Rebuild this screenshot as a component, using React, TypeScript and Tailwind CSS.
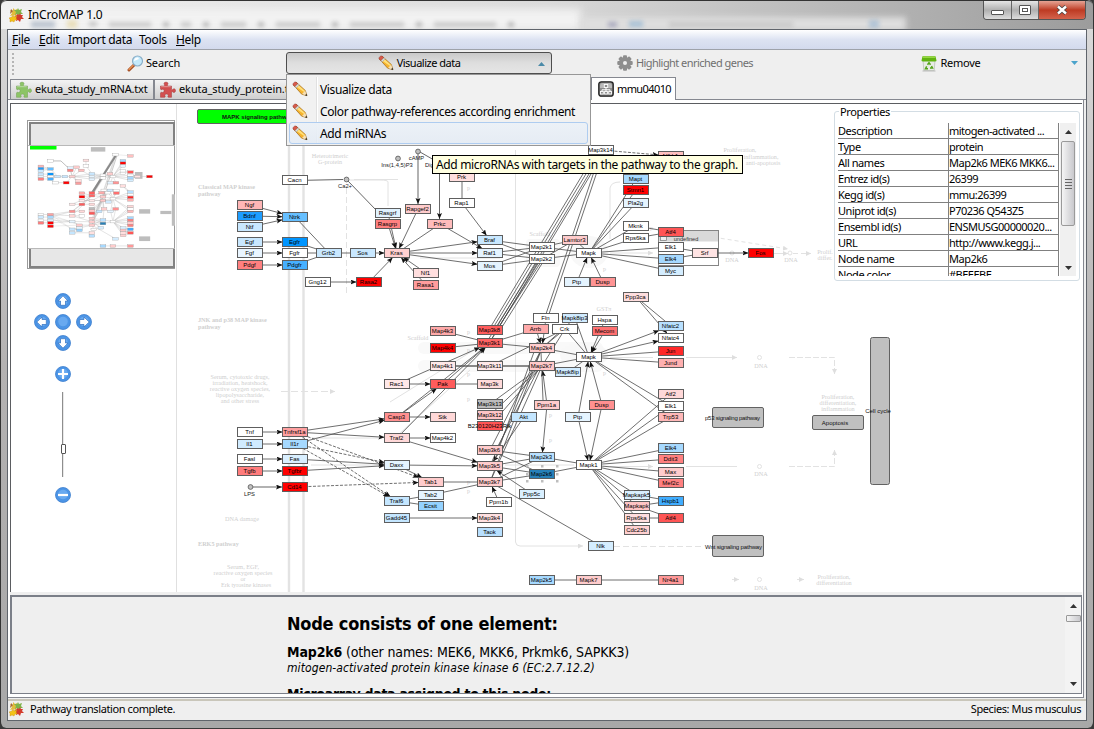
import React from "react";

type GraphNode = { id: string; x: number; y: number; fill: string };

const NODE_W = 25;
const NODE_H = 9;

const nodeTable = `
Ngf 237 200 #ffb6b6;Bdnf 237 211 #1e9dff;Ntf 237 222 #c9e8ff;Egf 237 237 #c9e8ff;Fgf 237 248 #e9f5ff;Pdgf 237 260 #ff8080
Cacn 282 175 #ffffff;Ntrk 282 212 #66bfff;Egfr 282 237 #0095ff;Fgfr 282 248 #ffffff;Pdgfr 282 260 #47b0ff
Grb2 316 248 #c9e8ff;Sos 350 248 #c9e8ff;Gng12 305 277 #ffffff;Rasa2 356 277 #ff0000
Rasgrf 375 208 #e0f2ff;Rasgrp 375 219 #ff8080;Rapgef2 405 204 #ffcccc;Prkc 427 219 #ffbcbc;Prk 449 172 #ffdede;Rap1 449 198 #ffffff
Kras 384 248 #ffd0d0;Nf1 413 268 #ffdede;Rasa1 413 280 #ff9c9c;Braf 477 235 #c9e8ff;Raf1 477 248 #e5f4ff;Mos 477 261 #e5f4ff
Map2k1 529 242 #ffffff;Map2k2 529 254 #ffffff;Map3k14 588 145 #ffffff;Nfkb1 658 151 #ffc0c0;Mapt 623 174 #a6d9ff;Stmn1 623 185 #ff0000
Pla2g 623 198 #e5f4ff;Mknk 623 221 #ffffff;Rps6ka 623 233 #ffffff;Lamtor3 562 235 #ffcccc;Mapk 576 248 #ffffff
Atf4 658 227 #ff5555;Elk1 658 242 #ffffff;Elk4 658 254 #a6d9ff;Myc 658 266 #d4edff;Srf 692 248 #ffe4e4;Fos 748 248 #ff0000
Ptp 564 277 #e5f4ff;Dusp 590 277 #ff9494;Ppp3ca 623 292 #ffdede
Tnf 237 427 #ffffff;Il1 237 439 #d0ebff;Fasl 237 454 #ffffff;Tgfb 237 466 #ff7c7c;Tnfrsf1a 282 427 #ffa0a0;Il1r 282 439 #a6d9ff
Fas 282 454 #d9efff;Tgfbr 282 466 #ff0000;Cd14 282 482 #ff0000
Map4k3 430 326 #ffaaaa;Map4k4 430 343 #ff0000;Map4k1 430 361 #ffe8e8;Pak 430 379 #ff5c5c;Rac1 384 379 #ffe8e8
Map3k8 477 325 #ff5c5c;Map3k1 477 338 #ff6464;Map3k11 477 361 #ffe8e8;Map3k 477 379 #ffdada;Fln 533 313 #ffffff;Arrb 523 324 #ffaaaa
Crk 552 324 #ffffff;Map2k4 529 343 #ffcccc;Map2k7 529 361 #ffc8c8;Mapk8ip 555 367 #d0ebff
Map3k13 477 399 #bcbcbc;Map3k12 477 410 #ffc4c4;B230120H23Rik 477 421 #ff5555;Casp3 384 412 #ff9090;Stk 430 412 #ffd8d8
Traf2 384 433 #ffd8d8;Map4k2 430 433 #ffffff;Map3k6 477 445 #ffcccc;Map3k5 477 461 #ffcccc;Map3k7 477 477 #ffcccc
Daxx 384 460 #e5f4ff;Tab1 418 477 #ffcccc;Tab2 418 490 #e5f4ff;Ecsit 418 501 #94d2ff;Traf6 384 496 #c4e6ff;Gadd45 384 513 #c4e6ff
Map3k4 477 513 #ffe0e0;Taok 477 527 #b8e0ff;Ppm1b 486 497 #ffffff;Ppm1a 534 400 #ffcccc;Akt 511 412 #c4e6ff
Map2k3 529 452 #b8e0ff;Map2k6 529 469 #2680b8;Ppp5c 519 489 #d9efff;Map2k5 529 575 #a6d9ff
Mapk8ip3 562 313 #d0ebff;Hspa 592 315 #ffffff;Mecom 592 326 #ff7070;Mapk|2 576 352 #ffffff
Nfatc2 658 321 #b8e0ff;Nfatc4 658 333 #ffffff;Jun 658 346 #ff2828;Jund 658 358 #ffb0b0
Atf2 658 389 #ffd8d8;Elk1|2 658 401 #ffffff;Trp53 658 412 #ffb8b8;Elk4|2 658 443 #a6d9ff;Ddit3 658 454 #ff8080;Max 658 467 #ffcccc;Mef2c 658 478 #ff8080
Dusp|2 589 400 #ff9090;Ptp|2 565 412 #e5f4ff;Mapk1 576 460 #ffffff;Mapkapk5 624 490 #d9efff;Mapkapk 624 501 #ffc4c4
Rps6ka|2 624 513 #ffdede;Cdc25b 624 525 #ffd0d0;Hspb1 658 496 #40adff;Atf4|2 658 513 #ff5555
Nlk 588 541 #d4edff;Mapk7 576 575 #ffcccc;Nr4a1 658 575 #ff9898`;

const nodes: GraphNode[] = nodeTable
  .trim()
  .split(/[;\n]/)
  .map((row) => {
    const [id, x, y, fill] = row.trim().split(" ");
    return { id, x: Number(x) + 0.5, y: Number(y) + 0.5, fill };
  });

const byId: Record<string, GraphNode> = Object.fromEntries(nodes.map((n) => [n.id, n]));

// ">" draws an arrow head, "-" a plain line, "~" a dashed arrow
const edgeTable = `
Ngf > Ntrk;Bdnf > Ntrk;Ntf > Ntrk;Egf > Egfr;Fgf > Fgfr;Pdgf > Pdgfr;Ntrk - Grb2;Egfr - Grb2;Fgfr - Grb2;Pdgfr - Grb2
Grb2 - Sos;Sos > Kras;Gng12 > Rasa2;Rasa2 > Kras;Rasgrf > Kras;Rasgrp > Kras;Rapgef2 > Kras;Prkc - Kras;Nf1 > Kras;Rasa1 > Kras
Kras > Braf;Kras > Raf1;Kras > Mos;Prkc > Raf1;Prk - Rap1;Rap1 > Braf
Braf - Map2k1;Braf - Map2k2;Raf1 - Map2k1;Raf1 - Map2k2;Mos - Map2k1;Mos - Map2k2;Map2k1 - Mapk;Map2k2 - Mapk;Lamtor3 - Mapk;Lamtor3 - Map2k1;Lamtor3 - Map2k2
Map3k14 ~ Nfkb1;Mapk - Mapt;Mapk - Stmn1;Mapk - Pla2g;Mapk - Mknk;Mapk - Rps6ka;Mapk - Elk1;Mapk - Elk4;Mapk - Myc;Ptp > Mapk;Dusp > Mapk
Mknk - Atf4;Rps6ka - Atf4;Elk1 - Srf;Elk4 - Srf;Srf > Fos
Tnf > Tnfrsf1a;Il1 > Il1r;Fasl > Fas;Tgfb > Tgfbr;Tnfrsf1a > Casp3;Il1r > Casp3;Tnfrsf1a > Traf2;Fas > Daxx;Tgfbr > Daxx
Tnfrsf1a ~ Tab1;Il1r ~ Daxx;Il1r ~ Traf6;Tnfrsf1a ~ Traf6;Cd14 ~ Tab1
Map4k3 - Map3k1;Map4k4 - Map3k1;Map4k1 - Map3k11;Map4k1 - Map2k7;Rac1 > Pak;Rac1 > Map3k1;Pak > Map3k1;Pak - Map3k;Casp3 > Pak;Casp3 > Map3k1;Casp3 > Stk;Traf2 > Map4k2;Traf2 > Map3k5;Traf2 > Map3k1
Daxx > Map3k5;Daxx > Tab1;Tab1 - Map3k7;Tab2 - Map3k7;Traf6 - Tab2;Traf6 - Ecsit;Gadd45 > Map3k4
Map3k1 - Arrb;Map3k1 - Map2k4;Map3k11 - Map2k7;Map3k11 - Crk;Map3k13 - Map2k7;Map3k12 - Map2k7;B230120H23Rik - Map2k7
Map3k6 - Map2k3;Map3k6 - Map2k6;Map3k5 - Map2k3;Map3k5 - Map2k6;Map3k7 - Map2k3;Map3k7 - Map2k6;Map3k6 - Map2k4;Map3k5 - Map2k4;Map3k7 - Map2k7;Map3k7 - Map2k4
Ppm1b > Map3k7;Ppp5c > Map3k5;Akt > Map3k5;Ppm1a > Map2k7;Ppm1a > Map2k3;Map3k7 - Nlk
Arrb > Map2k4;Fln > Map2k4;Crk - Map2k4;Crk - Map2k7;Mapk8ip3 - Map2k4;Mapk8ip3 - Mapk|2;Crk - Mapk|2;Map2k4 - Mapk|2;Map2k7 - Mapk|2;Mapk8ip - Mapk|2
Hspa > Mapk|2;Mecom > Mapk|2;Mapk|2 > Nfatc2;Mapk|2 > Nfatc4;Mapk|2 - Jun;Mapk|2 - Jund;Mapk|2 - Elk1|2;Mapk|2 - Trp53;Ppp3ca > Nfatc4;Ppp3ca - Nfatc2
Ptp|2 > Mapk|2;Dusp|2 > Mapk|2;Ptp|2 > Mapk1;Dusp|2 > Mapk1;Map2k3 - Mapk1;Map2k6 - Mapk1
Mapk1 - Atf2;Mapk1 - Elk1|2;Mapk1 - Trp53;Mapk1 - Elk4|2;Mapk1 - Ddit3;Mapk1 - Max;Mapk1 - Mef2c;Mapk1 - Mapkapk5;Mapk1 - Mapkapk;Mapk1 - Rps6ka|2;Mapk1 - Cdc25b
Mapkapk5 - Hspb1;Mapkapk - Hspb1;Mapkapk - Atf4|2;Rps6ka|2 - Atf4|2;Map2k5 - Mapk7;Mapk7 - Nr4a1`;

const edges = edgeTable
  .trim()
  .split(/[;\n]/)
  .map((row) => row.trim().split(" "))
  .map(([from, kind, to]) => {
    const a = byId[from];
    const b = byId[to];
    const ax = a.x + NODE_W / 2;
    const ay = a.y + NODE_H / 2;
    const bx = b.x + NODE_W / 2;
    const by = b.y + NODE_H / 2;
    const dx = ax - bx;
    const dy = ay - by;
    const t =
      kind === "-" ? 0 : Math.min(dx ? (NODE_W / 2) / Math.abs(dx) : 1, dy ? (NODE_H / 2) / Math.abs(dy) : 1);
    return { key: from + kind + to, kind, x1: ax, y1: ay, x2: bx + dx * t, y2: by + dy * t };
  });

const bundle = [
  [595, 154, 490, 328], [598, 154, 493, 328], [601, 154, 495, 330], [603, 154, 490, 342],
  [600, 154, 546, 314], [603, 154, 549, 314],
  [537, 262, 488, 340], [539, 262, 491, 340], [541, 262, 496, 331], [543, 262, 497, 335],
  [534, 352, 494, 462], [538, 370, 498, 446], [541, 352, 543, 400],
];

function Edges({ heads }: { heads: boolean }) {
  return (
    <g stroke="#4a4a4a" strokeWidth={heads ? 0.8 : 1.6} opacity={heads ? 1 : 0.45}>
      {edges.map((e) => (
        <line key={e.key} x1={e.x1} y1={e.y1} x2={e.x2} y2={e.y2}
          strokeDasharray={e.kind === "~" ? "3 1.5" : undefined}
          markerEnd={heads && e.kind !== "-" ? "url(#head)" : undefined} />
      ))}
      {bundle.map(([x1, y1, x2, y2], i) => (
        <line key={i} x1={x1} y1={y1} x2={x2} y2={y2} />
      ))}
    </g>
  );
}

const circles: [number, number, string, number, number][] = [
  [346.5, 179.5, "Ca2+", 345, 188],
  [398, 158.5, "Ins(1,4,5)P3", 397, 167],
  [418, 151.5, "cAMP", 416.5, 160],
  [250.5, 487, "LPS", 249.5, 496],
];

const faint: [number, number, string, "start" | "middle", boolean][] = [
  [198, 189, "Classical MAP kinase", "start", true], [198, 195.5, "pathway", "start", true],
  [198, 322, "JNK and p38 MAP kinase", "start", true], [198, 328.5, "pathway", "start", true],
  [240, 379, "Serum, cytotoxic drugs,", "middle", false], [240, 385, "irradiation, heatshock,", "middle", false],
  [240, 391, "reactive oxygen species,", "middle", false], [240, 397, "lipopolysaccharide,", "middle", false],
  [240, 403, "and other stress", "middle", false], [242, 521, "DNA damage", "middle", false],
  [198, 546, "ERK5 pathway", "start", true], [243, 569, "Serum, EGF,", "middle", false],
  [243, 575, "reactive oxygen species", "middle", false], [243, 581, "or", "middle", false],
  [246, 587, "Erk tyrosine kinases", "middle", false], [330, 158, "Heterotrimeric", "middle", false],
  [330, 164, "G-protein", "middle", false], [418, 340, "Scaffold", "middle", false],
  [540, 236, "Scaffold", "middle", false], [604, 311, "GSTπ", "middle", false],
  [740, 152, "Proliferation,", "middle", false], [761, 159, "inflammation,", "middle", false],
  [763, 165, "anti-apoptosis", "middle", false], [838, 399, "Proliferation,", "middle", false],
  [838, 405, "differentiation,", "middle", false], [838, 411, "inflammation", "middle", false],
  [834, 579, "Proliferation,", "middle", false], [834, 585, "differentiation", "middle", false],
  [732, 262, "DNA", "middle", false], [791, 262, "DNA", "middle", false],
  [825, 254, "Prolif.", "middle", false], [825, 260, "differ.", "middle", false],
  [761, 368, "DNA", "middle", false], [761, 476, "DNA", "middle", false], [761, 590, "DNA", "middle", false],
];

function PathwayGraph() {
  return (
    <svg width="905" height="488" viewBox="177 104 905 488" className="block" fontFamily="'Liberation Sans', Arial, sans-serif">
      <defs>
        <marker id="head" markerUnits="userSpaceOnUse" markerWidth="7" markerHeight="6" refX="6" refY="2.5" orient="auto">
          <path d="M0 0L6 2.5L0 5L1.2 2.5Z" fill="#111" stroke="none" />
        </marker>
        <marker id="faintHead" markerUnits="userSpaceOnUse" markerWidth="7" markerHeight="6" refX="5" refY="2.5" orient="auto">
          <path d="M0 0L5 2.5L0 5Z" fill="#dedede" />
        </marker>
      </defs>
      <path d="M289 104V592M303.5 104V592" stroke="#e3e3e3" strokeWidth="2.4" />
      <rect x="418" y="342" width="185" height="12" rx="6" fill="#f9f9f9" />
      <rect x="418" y="360" width="185" height="12" rx="6" fill="#f9f9f9" />
      <ellipse cx="589" cy="252" rx="19" ry="16" fill="#f8f8f8" />
      <ellipse cx="584" cy="355" rx="24" ry="13" fill="#f8f8f8" />
      <rect x="526" y="239" width="34" height="28" rx="4" fill="#f8f8f8" />
      <g fill="none" stroke="#e2e2e2" strokeWidth="1">
        <path d="M515.5 150V542Q516 546 520 546H583" markerEnd="url(#faintHead)" />
        <path d="M614 546.5H702" strokeDasharray="6 3" />
        <path d="M346.5 188V295" strokeDasharray="6 3" />
        <path d="M281 391.5H335" strokeDasharray="7 3" markerEnd="url(#faintHead)" />
        <path d="M398 179.5H354M610 253H653" markerEnd="url(#faintHead)" />
        <path d="M610 357.5H653M686 466.500H737M686 357.500H737M610 466.500H653" markerEnd="url(#faintHead)" />
        <path d="M686 357.5H737" markerEnd="url(#faintHead)" />
        <path d="M780 253.5H788M766 253.5H788" markerEnd="url(#faintHead)" />
        <path d="M793 253.5H811" strokeDasharray="5 3" markerEnd="url(#faintHead)" />
        <path d="M700 235L788 249" strokeDasharray="4 3" markerEnd="url(#faintHead)" />
        <path d="M789 357.5H834.5V374" strokeDasharray="6 2" markerEnd="url(#faintHead)" />
        <path d="M789 466.5H834.5V450" strokeDasharray="6 2" markerEnd="url(#faintHead)" />
        <path d="M610 239V188Q611 182 620 182M388 206V182Q388 180 380 180H348" />
        <path d="M420 258H500M312 438H380M311 465H380M390 402L474 350M398 435L470 370M505 465H574" />
        <path d="M732 579.5H739" markerEnd="url(#faintHead)" />
        <path d="M797 579.5H804" markerEnd="url(#faintHead)" />
        <circle cx="759.5" cy="357.5" r="2" /><circle cx="759.5" cy="466.5" r="2" /><circle cx="759.5" cy="579.5" r="2" />
        <circle cx="732" cy="253" r="2" /><circle cx="790" cy="253" r="2" />
      </g>
      <g fill="#cfcfcf" fontSize="6.2" fontFamily="'Liberation Serif', serif">
        {faint.map(([x, y, label, anchor, bold], i) => (
          <text key={i} x={x} y={y} textAnchor={anchor} fontWeight={bold ? 700 : 400}>{label}</text>
        ))}
        {[[467, 190], [467, 334], [467, 352], [467, 376], [467, 401], [467, 484], [467, 493], [527, 381], [549, 417], [549, 442], [603, 271], [603, 375], [650, 230]].map(([x, y]) => (
          <text key={x + "," + y} x={x} y={y}>p</text>
        ))}
      </g>
      <rect x="658.5" y="230.5" width="60" height="35" fill="#fff" stroke="#858585" />
      <rect x="659" y="231" width="59" height="10.5" fill="#d9d9d9" />
      <rect x="660.5" y="236.5" width="6" height="4" fill="#eee" stroke="#777" strokeWidth=".7" />
      <text x="686" y="240.5" fontSize="5.6" textAnchor="middle" fill="#333">undefined</text>
      <Edges heads />
      <g stroke="#4a4a4a" strokeWidth=".85" fill="none">
        <path d="M295 180.5L343 179.5M348 181L376 210" />
        <path d="M253 487H282" markerEnd="url(#head)" />
        <path d="M418 154V204" markerEnd="url(#head)" />
        <path d="M439.5 160V219" markerEnd="url(#head)" />
        <path d="M420 152L434 160" />
      </g>
      {circles.map(([cx, cy, label, tx, ty]) => (
        <g key={label}>
          <circle cx={cx} cy={cy} r="2.4" fill="#c0c0c0" stroke="#555" strokeWidth=".8" />
          <text x={tx} y={ty} fontSize="5.8" textAnchor="middle" fill="#222">{label}</text>
        </g>
      ))}
      <text x="425" y="167" fontSize="5.8" fill="#222">Diglyceride</text>
      {nodes.map((n) => (
        <g key={n.id}>
          <rect x={n.x} y={n.y} width={NODE_W} height={NODE_H} fill={n.fill} stroke="#5e5e5e" strokeWidth="1" />
          <text x={n.x + NODE_W / 2 - 0.5} y={n.y + 6.9} fontSize="6" textAnchor="middle" fill="#000">{n.id.split("|")[0]}</text>
        </g>
      ))}
      <g fill="#bdbdbd">
        {[[526, 465], [541, 465], [556, 465], [526, 473], [556, 473], [526, 480], [541, 480], [556, 480]].map(([x, y]) => (
          <rect key={x + "," + y} x={x} y={y} width="2.5" height="2.5" />
        ))}
      </g>
      <g fill="#c0c0c0" stroke="#626262">
        <rect x="712.5" y="407.5" width="51" height="20" rx="1.5" />
        <rect x="712.5" y="535.5" width="51" height="21" rx="1.5" />
        <rect x="812.5" y="415.5" width="51" height="14" rx="1.5" />
        <rect x="870.5" y="337.5" width="19" height="147" rx="2" />
        <rect x="197.5" y="109.5" width="118" height="14" rx="1.5" fill="#00ff00" />
      </g>
      <g fontSize="6" textAnchor="middle" fill="#111">
        <text x="732.5" y="420" textLength="55">p53 signaling pathway</text>
        <text x="733.5" y="549" textLength="57">Wnt signaling pathway</text>
        <text x="835" y="425">Apoptosis</text>
        <text x="878" y="413">Cell cycle</text>
        <text x="222" y="119" fontWeight="700" textAnchor="start">MAPK signaling pathway</text>
      </g>
    </svg>
  );
}

function Minimap() {
  return (
    <svg width="148" height="149" viewBox="27 120 148 149" className="block">
      <rect x="27.5" y="120.5" width="147" height="148" fill="#fff" stroke="#9a9a9a" />
      <rect x="30" y="123" width="144" height="22" fill="#e7e7e7" />
      <rect x="30" y="249" width="144" height="17" fill="#e7e7e7" />
      <path d="M30 145V123H174V145M30 249V267H174V249" fill="none" stroke="#828282" strokeWidth="2" />
      <path d="M28 145.5H175M28 248.5H175" stroke="#b8b8b8" />
      <rect x="30" y="146" width="26.5" height="3.5" fill="#00ff00" />
      <g transform="translate(-12.2 122.7) scale(0.2125)">
        <Edges heads={false} />
        <path d="M600 155L485 335M604 155L490 335" stroke="#777" strokeWidth="6" opacity=".8" />
        <path d="M608 155L545 345" stroke="#888" strokeWidth="3" opacity=".7" />
        <rect x="692" y="232" width="36" height="32" fill="#bdbdbd" />
        <path d="M295 180H344L376 210" fill="none" stroke="#999" strokeWidth="3" />
        {nodes.map((n) => (
          <rect key={n.id} x={n.x - 1} y={n.y - 1} width={NODE_W + 2} height={NODE_H + 3} fill={n.fill} stroke="#999" strokeWidth="1.5" />
        ))}
        <g fill="#bdbdbd">
          <rect x="712" y="407" width="52" height="21" /><rect x="712" y="535" width="52" height="22" />
          <rect x="812" y="415" width="52" height="15" /><rect x="866" y="337" width="16" height="148" />
          <rect x="485" y="115" width="68" height="21" />
        </g>
      </g>
    </svg>
  );
}

function Puzzle({ color, dark }: { color: string; dark: string }) {
  return (
    <svg width="17" height="17" viewBox="0 0 17 17" className="shrink-0">
      <path d="M5 5C6.500 4.500 5 3.500 5 2.500 5 .7 9 .7 9 2.500 9 3.500 7.500 4.500 9 5L12.500 5V8.200C13.500 9.500 14 7.800 15 7.800 17 7.800 17 11.500 15 11.500 14 11.500 13.500 10 12.500 11.200V16.300H9.500C8 15.800 9.500 15 9.300 14.200 9 12.700 6 12.700 5.800 14.200 5.700 15 7 15.800 5.500 16.300H1.500V12C2 10.500 3 11.800 4 11.500 5.600 11 5.600 8.500 4 8.200 3 8 2 9.500 1.500 8V5Z"
        fill={color} stroke={dark} strokeWidth=".5" />
      <path d="M2.200 5.700H11.700" stroke="#fff" opacity=".4" />
    </svg>
  );
}

function AppLogo() {
  return (
    <svg width="15" height="16" viewBox="0 0 15 16" className="shrink-0">
      <path d="M4 1l2 2 2-1v3l2 1-3 1v3L5 8 1 9l2-3-2-3 3 1z" fill="#e2bd3b" />
      <path d="M9 1l1 2 3-1-1 3 2 2-3 0-1 2-2-2-2 1 1-3-2-2 3 0z" fill="#7fb34a" />
      <path d="M11 6l1 2 2 0-1 2 2 2-3 0-1 3-2-2-2 1 0-3-2-1 2-1 1-2 2 1z" fill="#d33b2c" />
      <path d="M4 8l1 2 3-1-1 2 1 2-2 0-1 2-2-1-2 1 0-3-1-1 3-1z" fill="#f2c318" stroke="#c98a12" strokeWidth=".4" />
      <path d="M2 2l2 2-3 3z" fill="#a76734" />
    </svg>
  );
}

function Pencil() {
  return (
    <svg width="16" height="16" viewBox="0 0 16 16" className="shrink-0">
      <path d="M1.200 3.800L4 1.100 13.300 9.500 15 14.700 9.700 13.200Z" fill="#f6b32d" stroke="#9c6412" strokeWidth=".7" />
      <path d="M2.500 4.600L4.700 2.500 13 10 12 11Z" fill="#ffdf78" />
      <path d="M1 3.900C.5 2.500 2.500.5 4 1L5.900 2.700 2.900 5.600Z" fill="#d95a4b" stroke="#8d3b32" strokeWidth=".5" />
      <path d="M3 5.700L6 2.800 7.200 3.900 4.200 6.900Z" fill="#ddd" stroke="#888" strokeWidth=".4" />
      <path d="M10 13.100L13.200 9.800 14.900 14.700Z" fill="#f5dfb6" />
      <path d="M13 14.200L14.500 12.800 15.200 15Z" fill="#222" />
    </svg>
  );
}

function Magnifier() {
  return (
    <svg width="17" height="17" viewBox="0 0 17 17" className="shrink-0">
      <path d="M6.800 10.200L2 15" stroke="#a34e24" strokeWidth="3" strokeLinecap="round" />
      <path d="M6.300 10.300L2 14.500" stroke="#e89255" strokeWidth="1.200" strokeLinecap="round" />
      <circle cx="10.500" cy="6" r="5" fill="#c4e9fb" stroke="#8bafc8" strokeWidth="1.200" />
      <path d="M7 6A3.500 3.500 0 0 1 11 2.500L12 4Z" fill="#fff" />
    </svg>
  );
}

function Gear() {
  return (
    <svg width="16" height="16" viewBox="0 0 16 16" className="shrink-0">
      <g fill="#8e8e8e">
        {[0, 45, 90, 135].map((a) => (
          <rect key={a} x="6" y="0.300" width="4" height="15.400" rx="1" transform={`rotate(${a} 8 8)`} />
        ))}
        <circle cx="8" cy="8" r="6" />
      </g>
      <circle cx="8" cy="8" r="2" fill="#efefef" />
    </svg>
  );
}

function RecycleBin() {
  return (
    <svg width="16" height="17" viewBox="0 0 16 17" className="shrink-0">
      <path d="M2 5H14L13.200 15.500H2.800Z" fill="#e7ebe4" stroke="#b4bdb0" strokeWidth=".7" />
      <path d="M1.500 1.200H14.500L15.500 5.500Q15.500 6.500 14 6.500H2Q.5 6.500 .5 5.500Z" fill="#61b312" />
      <path d="M2 1.500H14L14.600 3H1.400Z" fill="#95d840" />
      <path d="M6.500 9.800L8 7.800 9.500 9.800M10.500 11L11.500 13H9M7 13.700H4.500L5.700 11.300" fill="none" stroke="#53a318" strokeWidth="1.500" />
      <path d="M1.500 16H14.500" stroke="#bbb" />
    </svg>
  );
}

function NetworkIcon() {
  return (
    <svg width="16" height="16" viewBox="0 0 16 16" className="shrink-0">
      <rect x=".8" y=".8" width="14.400" height="14.400" rx="2.500" fill="#8b8b8b" stroke="#1e1e1e" strokeWidth="1.300" />
      <path d="M2 5Q2 2 5 2H11Q14 2 14 5V7H2Z" fill="#b9b9b9" />
      <path d="M8 6.500V10M4 10.500V8.800H12V10.500" fill="none" stroke="#fff" />
      <g fill="#8b8b8b" stroke="#fff" strokeWidth=".9">
        <rect x="6.300" y="3.500" width="3.400" height="3" /><rect x="2.500" y="10.500" width="2.800" height="2.500" />
        <rect x="6.600" y="10.500" width="2.800" height="2.500" /><rect x="10.700" y="10.500" width="2.800" height="2.500" />
      </g>
    </svg>
  );
}

function RoundButton({ shape }: { shape: string }) {
  const turns: Record<string, number> = { up: 0, right: 90, down: 180, left: 270 };
  return (
    <svg width="16" height="16" viewBox="0 0 16 16" className="block">
      <circle cx="8" cy="8" r="7.500" fill="#4b94e6" stroke="#3e7fce" strokeWidth=".8" />
      <circle cx="8" cy="7.500" r="4.800" fill="#72b0f3" opacity=".75" />
      {shape in turns && (
        <path transform={`rotate(${turns[shape]} 8 8)`} d="M8 2.800L13 8H10.500V12.300H5.500V8H3Z" fill="#fff" stroke="#2f6fbd" strokeWidth=".7" />
      )}
      {shape === "plus" && <path d="M8 3V13M3 8H13" stroke="#fff" strokeWidth="2.200" />}
      {shape === "minus" && <path d="M3 8H13" stroke="#fff" strokeWidth="2.200" />}
    </svg>
  );
}

function Triangle({ up, color = "#333" }: { up?: boolean; color?: string }) {
  return (
    <svg width="7" height="4" viewBox="0 0 7 4" className="block">
      <path d={up ? "M3.500 0L7 4H0Z" : "M0 0H7L3.500 4Z"} fill={color} />
    </svg>
  );
}

const properties: [string, string][] = [
  ["Description", "mitogen-activated ..."],
  ["Type", "protein"],
  ["All names", "Map2k6 MEK6 MKK6..."],
  ["Entrez id(s)", "26399"],
  ["Kegg id(s)", "mmu:26399"],
  ["Uniprot id(s)", "P70236 Q543Z5"],
  ["Ensembl id(s)", "ENSMUSG00000020..."],
  ["URL", "http://www.kegg.j..."],
  ["Node name", "Map2k6"],
  ["Node color", "#BEEEBE"],
];

function PropertiesPanel() {
  return (
    <section className="absolute left-[657px] top-[7px] h-[170px] w-[246px] rounded-[3px] border border-[#d3dde4] bg-white">
      <h2 className="absolute -top-[7px] left-[4px] bg-white px-px text-[11px] leading-[14px] tracking-[-0.35px]">Properties</h2>
      <div className="ml-[3px] mt-[11px] flex h-[153px] overflow-hidden">
        <div className="w-[221px] overflow-hidden">
          {properties.map(([name, value]) => (
            <div key={name} className="flex h-[16px] text-[11px] leading-[15px]">
              <div className="w-[111px] shrink-0 whitespace-nowrap border-b border-r border-[#808080] tracking-[-0.45px]">{name}</div>
              <div className="w-[110px] shrink-0 whitespace-nowrap border-b border-r border-[#808080] tracking-[-0.5px]">{value}</div>
            </div>
          ))}
        </div>
        <div className="ml-px flex w-[16px] flex-col items-center bg-[#f0f0f0]">
          <div className="flex h-[18px] items-center"><Triangle up /></div>
          <div className="flex h-[85px] w-[14px] flex-col items-center justify-center gap-[2px] rounded-[2px] border border-[#9a9a9a] bg-gradient-to-r from-[#f5f5f5] to-[#c9c9cd]">
            {[0, 1, 2, 3].map((i) => <div key={i} className="h-px w-[7px] bg-[#666]" />)}
          </div>
          <div className="mt-auto flex h-[16px] items-center"><Triangle /></div>
        </div>
      </div>
    </section>
  );
}

const menuItems = ["Visualize data", "Color pathway-references according enrichment", "Add miRNAs"];

function VisualizeMenu() {
  return (
    <div className="absolute left-0 top-[22px] z-20 flex h-[72px] w-[305px] flex-col border border-[#979797] bg-[#f1f1f1] px-[2px] pt-[3px] text-[12px] tracking-[-0.37px]">
      <div className="absolute bottom-[2px] left-[29px] top-[2px] w-[2px] border-l border-[#e0e0e0] bg-white" />
      {menuItems.map((item, i) => (
        <div key={item}
          className={
            i === 2
              ? "relative flex h-[22px] items-center gap-[12px] rounded-[3px] border border-[#aeccf0] bg-gradient-to-b from-[#ecf1f7] to-[#e3ebf5]/80 pl-[2px]"
              : "relative flex h-[22px] items-center gap-[12px] border border-transparent pl-[2px]"
          }>
          <Pencil />
          <span className="whitespace-nowrap pt-[2px]">{item}</span>
        </div>
      ))}
    </div>
  );
}

function TitleBar() {
  return (
    <header className="relative flex h-[29px] shrink-0 overflow-hidden rounded-t-[6px] border-t border-[#333] bg-gradient-to-r from-[#f0f0f0] via-[#d9d9d9] to-[#9c9c9c]">
      <div className="absolute left-0 top-[8px] h-[21px] w-[580px] bg-[#f2f2f2] blur-[4px]" />
      <div className="absolute left-[580px] top-[16px] h-[14px] w-[325px] bg-[#dedede] blur-[3px]" />
      <div className="absolute left-[30px] top-[19px] flex items-center gap-[12px] opacity-30 blur-[2px]">
        <div className="h-[7px] w-[24px] bg-[#4c668a]" />
        <div className="h-[8px] w-[10px] bg-[#d8b646]" />
        <div className="h-[4px] w-[8px] bg-[#555]" />
        <div className="h-[5px] w-[42px] bg-[#777]" />
        <div className="h-[5px] w-[6px] bg-[#444]" />
        <div className="h-[5px] w-[10px] bg-[#777]" />
        <div className="h-[5px] w-[6px] bg-[#444]" />
        <div className="h-[5px] w-[25px] bg-[#777]" />
        <div className="h-[5px] w-[6px] bg-[#444]" />
        <div className="h-[5px] w-[44px] bg-[#777]" />
        <div className="h-[5px] w-[6px] bg-[#444]" />
        <div className="h-[5px] w-[54px] bg-[#777]" />
        <div className="h-[5px] w-[6px] bg-[#444]" />
        <div className="h-[5px] w-[62px] bg-[#777]" />
        <div className="h-[5px] w-[6px] bg-[#444]" />
        <div className="ml-[82px] h-[5px] w-[9px] bg-[#337]" />
        <div className="h-[6px] w-[14px] bg-[#3584c4]" />
        <div className="ml-[14px] h-[5px] w-[124px] bg-[#999]" />
        <div className="ml-[64px] h-[8px] w-[10px] bg-[#4f8ac4]" />
      </div>
      <div className="relative flex w-full items-start pl-[8px]">
        <div className="mt-[6px]"><AppLogo /></div>
        <h1 className="ml-[4px] mt-[5px] text-[12px] leading-[17px] tracking-[-0.2px]">InCroMAP 1.0</h1>
        <div className="ml-auto mr-[7px] flex h-[19px] overflow-hidden rounded-b-[4px] border border-t-0 border-[#555]">
          <div className="flex w-[28px] items-center justify-center border-r border-[#666] bg-gradient-to-b from-[#e6e6e6] via-[#b0b0b0] to-[#ddd]">
            <div className="mt-[4px] h-[5px] w-[13px] rounded-[1px] border border-[#555] bg-white" />
          </div>
          <div className="flex w-[27px] items-center justify-center border-r border-[#666] bg-gradient-to-b from-[#e6e6e6] via-[#b0b0b0] to-[#ddd]">
            <div className="h-[10px] w-[12px] rounded-[1px] border border-[#555] bg-white p-[2px]"><div className="h-full border border-[#555]" /></div>
          </div>
          <div className="flex w-[46px] items-center justify-center bg-gradient-to-b from-[#e5a394] via-[#bd3a22] to-[#d4624b]">
            <svg width="12" height="10" viewBox="0 0 12 10">
              <path d="M2 1.500L10 8.500M10 1.500L2 8.500" stroke="#444" strokeWidth="4" />
              <path d="M2 1.500L10 8.500M10 1.500L2 8.500" stroke="#fff" strokeWidth="2.400" />
            </svg>
          </div>
        </div>
      </div>
    </header>
  );
}

export default function App() {
  return (
    <div className="flex h-[729px] w-[1094px] flex-col overflow-hidden bg-[#3a3a3a] font-['Noto_Sans',sans-serif] text-black">
      <div className="flex h-[728px] flex-col overflow-hidden rounded-[6px] border-x border-[#333] bg-gradient-to-b from-[#dcdcdc] via-[#b4b2b2] to-[#a8a8a8]">
        <TitleBar />
        <div className="ml-[6px] mr-[6px] flex h-[692px] flex-col border border-[#5f646b] bg-[#efefef]">
          <nav className="flex h-[20px] shrink-0 items-center border-b border-[#9ea2aa] bg-gradient-to-b from-white via-[#dde3f2] to-[#d3daed] pl-[4px] text-[12px] leading-[18px] tracking-[-0.3px]">
            <span className="w-[27px]"><u>F</u>ile</span>
            <span className="w-[29px]"><u>E</u>dit</span>
            <span className="w-[71px] whitespace-nowrap">Import data</span>
            <span className="w-[37px]">Tools</span>
            <span><u>H</u>elp</span>
          </nav>
          <div className="flex h-[27px] shrink-0 text-[11px]">
            <div className="ml-[4px] mt-[3px] h-[22px] w-[8px] border-l-2 border-dotted border-[#b5b5b5]" />
            <div className="flex h-[26px] w-[266px] items-center justify-center gap-[2px] pl-px tracking-[-0.1px]"><Magnifier />Search</div>
            <div className="relative mt-[2px] h-[22px] w-[266px]">
              <div className="relative flex h-[22px] items-center justify-center gap-[3px] rounded-[3px] border border-[#4e4e4e] bg-gradient-to-b from-[#c9c9c9] via-[#dedede] to-[#e5e5e5] tracking-[-0.5px]">
                <Pencil /><span className="pt-px">Visualize data</span>
                <div className="absolute right-[6px] top-[9px]"><Triangle up color="#4a8aa8" /></div>
              </div>
              <VisualizeMenu />
            </div>
            <div className="flex h-[26px] w-[266px] items-center justify-center gap-[3px] tracking-[-0.54px] text-[#707070]"><Gear />Highlight enriched genes</div>
            <div className="relative flex h-[26px] w-[266px] items-center justify-center gap-[3px] tracking-[-0.25px]">
              <RecycleBin />Remove
              <div className="absolute right-[6px] top-[11px]"><Triangle color="#4ba3cb" /></div>
            </div>
          </div>
          <div className="flex h-[23px] shrink-0 items-end border-b border-[#858890] pl-[2px] text-[11px]">
            <div className="flex h-[20px] w-[144px] items-center gap-[3px] border border-b-0 border-[#858890] bg-gradient-to-b from-[#f3f3f3] to-[#cfcfcf] pl-[4px]">
              <Puzzle color="#8cc466" dark="#6f9e50" /><span className="whitespace-nowrap tracking-[-0.2px]">ekuta_study_mRNA.txt</span>
            </div>
            <div className="flex h-[20px] w-[437px] items-center gap-[3px] border border-b-0 border-[#858890] bg-gradient-to-b from-[#f3f3f3] to-[#cfcfcf] pl-[4px]">
              <Puzzle color="#d25050" dark="#a03838" /><span className="whitespace-nowrap tracking-[-0.1px]">ekuta_study_protein.txt</span>
            </div>
            <div className="-mb-px flex h-[23px] w-[85px] items-center gap-[3px] border border-b-0 border-[#858890] bg-white pl-[6px]">
              <NetworkIcon /><span className="tracking-[-0.6px]">mmu04010</span>
            </div>
          </div>
          <main className="mr-[2px] flex h-[598px] shrink-0 flex-col border-b border-r border-[#858890] bg-white pl-[2px] pr-px pt-[3px]">
            <div className="flex h-[489px] border-l border-t border-[#5b5d61]">
              <aside className="flex w-[166px] shrink-0 flex-col border-r border-[#e0e0e0] pl-[16px] pt-[16px]">
                <div className="w-[148px]"><Minimap /></div>
                <div className="ml-[7px] mt-[24px] grid w-[58px] grid-cols-3 grid-rows-3 gap-x-[5px] gap-y-[5px]">
                  <span /><RoundButton shape="up" /><span />
                  <RoundButton shape="left" /><RoundButton shape="dot" /><RoundButton shape="right" />
                  <span /><RoundButton shape="down" /><span />
                </div>
                <div className="ml-[7px] mt-[15px] flex w-[58px] flex-col items-center">
                  <RoundButton shape="plus" />
                  <div className="mt-[10px] flex h-[85px] w-[2px] justify-center border-l border-[#8e8e8e] bg-[#e8e8e8]">
                    <div className="mt-[52px] h-[10px] w-[5px] shrink-0 rounded-[1px] border border-[#555] bg-white" />
                  </div>
                  <div className="mt-[10px]"><RoundButton shape="minus" /></div>
                </div>
              </aside>
              <div className="relative min-w-0 flex-1 overflow-hidden">
                <PathwayGraph />
                <PropertiesPanel />
                <div className="absolute left-[255px] top-[51px] flex h-[19px] w-[311px] items-center whitespace-nowrap border border-black bg-[#ffffe1] pl-[3px] text-[12px] tracking-[-0.35px]">
                  Add microRNAs with targets in the pathway to the graph.
                </div>
              </div>
            </div>
            <div className="h-[3px] shrink-0 bg-[#efefef]" />
            <section className="flex h-[99px] border-2 border-b border-r border-[#7b7f88] bg-[#efefef]">
              <article className="h-[96px] flex-1 overflow-hidden pl-[275px] font-['DejaVu_Sans_Condensed','DejaVu_Sans',sans-serif]">
                <h2 className="mt-[14px] whitespace-nowrap text-[18px] font-bold leading-[26px] tracking-[-0.22px]">Node consists of one element:</h2>
                <p className="mt-[6px] whitespace-nowrap text-[14px] leading-[19px] tracking-[-0.14px]"><b>Map2k6</b> (other names: MEK6, MKK6, Prkmk6, SAPKK3)</p>
                <p className="whitespace-nowrap text-[12px] italic leading-[13px] tracking-[0.09px]">mitogen-activated protein kinase kinase 6 (EC:2.7.12.2)</p>
                <h3 className="mt-[10px] whitespace-nowrap text-[14px] font-bold leading-[18px] tracking-[-0.3px]">Microarray data assigned to this node:</h3>
              </article>
              <div className="flex w-[16px] flex-col items-center bg-[#f3f3f3]">
                <div className="flex h-[18px] items-center"><Triangle up /></div>
                <div className="h-[7px] w-[15px] rounded-[1px] border border-[#999] bg-gradient-to-r from-[#f5f5f5] to-[#c9c9cd]" />
                <div className="mt-auto flex h-[18px] items-center"><Triangle /></div>
              </div>
            </section>
          </main>
          <footer className="mt-px flex h-[21px] shrink-0 items-center border-t-2 border-[#c9c6ba] bg-[#efefef] pb-[3px] pl-[1px] pr-[5px] text-[11px] tracking-[-0.4px]">
            <AppLogo />
            <span className="ml-[6px]">Pathway translation complete.</span>
            <span className="ml-auto">Species: Mus musculus</span>
          </footer>
        </div>
      </div>
    </div>
  );
}
